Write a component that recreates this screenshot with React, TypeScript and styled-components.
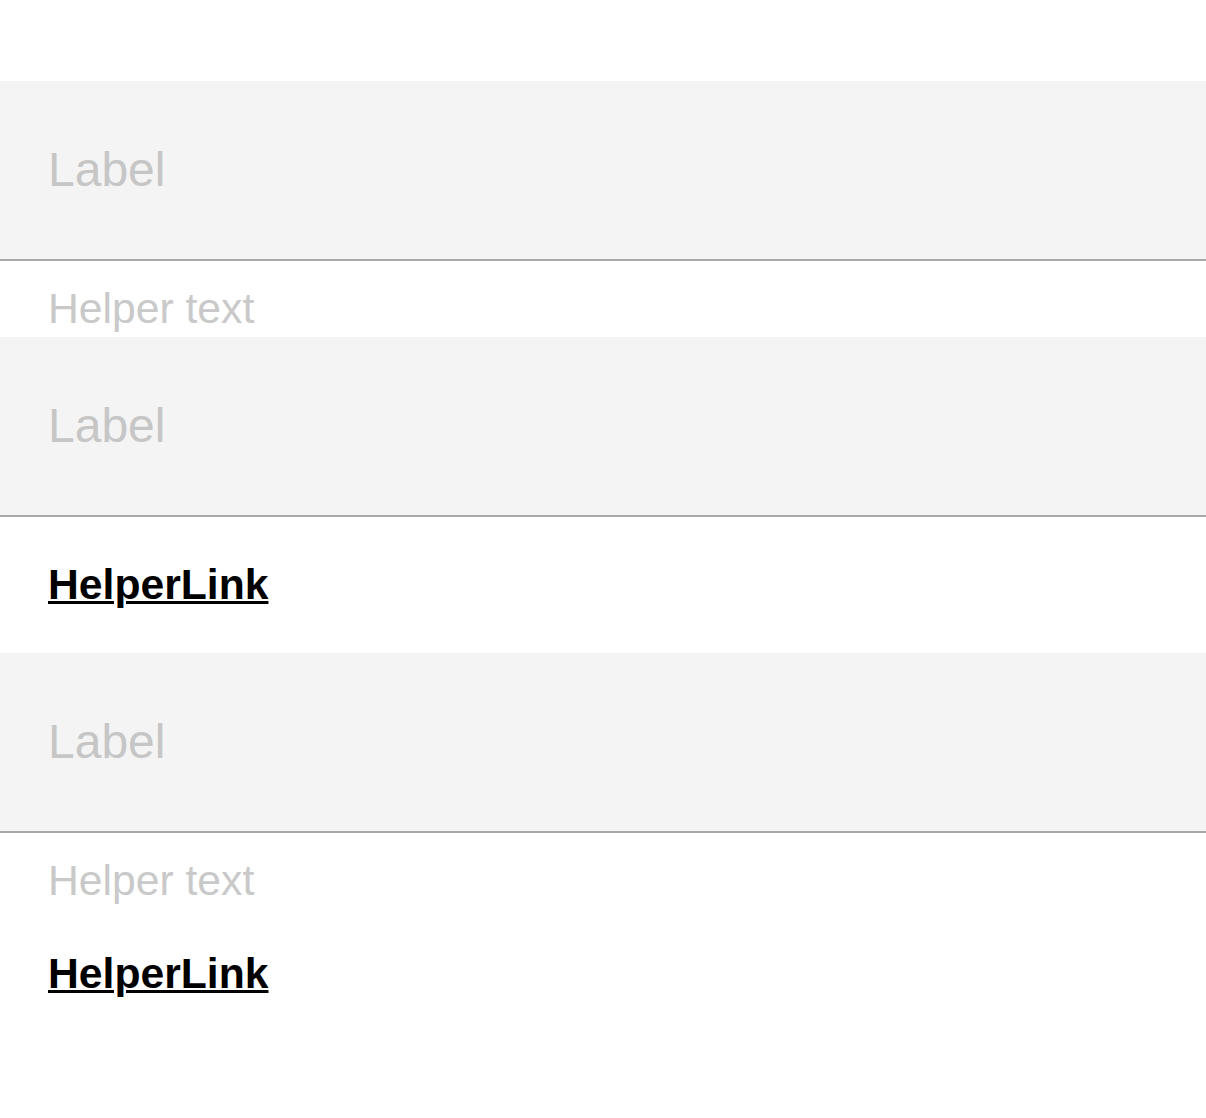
import React, {FC} from 'react';
import styled, {createGlobalStyle} from 'styled-components';

const GlobalStyle = createGlobalStyle`
  html, body {
    margin: 0;
    padding: 0;
    background: #ffffff;
  }
  body {
    font-family: "Liberation Sans", Arial, Helvetica, sans-serif;
  }
`

type FieldProps = {
    label: string
    helperText?: string
    helperLink?: string
}

const TextField: FC<FieldProps> = ({label, helperText, helperLink}) => {
    return (
        <FieldWrapper>
            <InputBox>
                <Label>{label}</Label>
            </InputBox>
            {helperText && (
                <HelperRow>
                    <HelperText>{helperText}</HelperText>
                </HelperRow>
            )}
            {helperLink && (
                <LinkRow $top={helperText ? 40 : 43}>
                    <HelperLink href="#">{helperLink}</HelperLink>
                </LinkRow>
            )}
        </FieldWrapper>
    );
};

const App: FC = () => {
    return (
        <>
            <GlobalStyle/>
            <Page>
                <TextField label="Label" helperText="Helper text"/>
                <TextField label="Label" helperLink="HelperLink"/>
                <TextField label="Label" helperText="Helper text" helperLink="HelperLink"/>
            </Page>
        </>
    );
};

export default App;


const Page = styled.div`
  display: flex;
  flex-direction: column;
  padding-top: 81px;
  min-height: 1118px;
  box-sizing: border-box;
`
const FieldWrapper = styled.div`
  display: flex;
  flex-direction: column;
`
const InputBox = styled.div`
  display: flex;
  align-items: center;
  box-sizing: border-box;
  height: 180px;
  padding: 0 48px;
  background-color: #f4f4f4;
  border-bottom: 2px solid #a8a8a8;
`
const Label = styled.span`
  font-size: 48px;
  line-height: 56px;
  color: #c6c6c6;
`
const HelperRow = styled.div`
  padding: 23px 48px 5px;
`
const HelperText = styled.div`
  font-size: 42.67px;
  line-height: 48px;
  color: #c9c9c9;
`
const LinkRow = styled.div<{ $top: number }>`
  padding: ${p => p.$top}px 48px 45px;
  font-size: 42.67px;
  line-height: 48px;
`
const HelperLink = styled.a`
  font-weight: 700;
  color: #000000;
  text-decoration: underline;
  text-decoration-thickness: 3px;
  text-underline-offset: 2px;
`
